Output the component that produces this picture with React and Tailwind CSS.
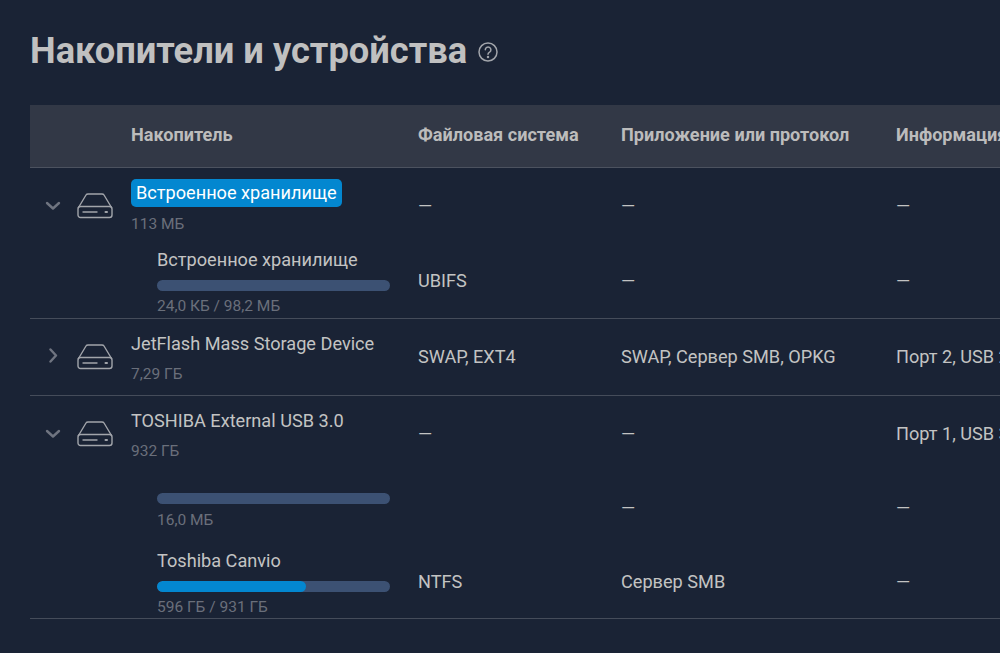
const GRID = "grid grid-cols-[101px_287px_203px_275px_400px] items-center";

function Chevron({ open }) {
  return (
    <svg width="18" height="18" viewBox="0 0 18 18" fill="none" stroke="#6f7480" strokeWidth="2.4" strokeLinecap="round" strokeLinejoin="round">
      {open ? <path d="M3 6 L9 11.5 L15 6" /> : <path d="M6.5 1.5 L12 7.5 L6.5 13.5" />}
    </svg>
  );
}

function Drive() {
  return (
    <svg width="36" height="26" viewBox="0 0 36 26" fill="none" stroke="#a2a5ab" strokeWidth="1.4" strokeLinejoin="round" strokeLinecap="round">
      <path d="M1.5 14.5 L9 2 Q9.6 1 11 1 L25 1 Q26.4 1 27 2 L34.5 14.5" />
      <rect x="1" y="13.5" width="34" height="11" rx="2.5" />
      <path d="M6 19 L20 19" />
      <path d="M28.5 19 L30 19" strokeWidth="2" />
    </svg>
  );
}

function Cells({ fs, app, info }) {
  return (
    <>
      <div className="whitespace-nowrap">{fs}</div>
      <div className="whitespace-nowrap">{app}</div>
      <div className="whitespace-nowrap">{info}</div>
    </>
  );
}

function DriveRow({ open, name, size, highlight, fs, app, info, border, h }) {
  return (
    <div className={`${GRID} ${h} ${border ? "border-b border-[#454c5a]" : ""}`}>
      <div className="flex items-center pl-[14px] gap-[15px]">
        <Chevron open={open} />
        <Drive />
      </div>
      <div className={`flex flex-col items-start whitespace-nowrap ${highlight ? "pt-[2px]" : "pt-[1px]"}`}>
        {highlight ? (
          <span className="bg-[#0387d0] text-white rounded-[5px] px-[5px] h-[28px] leading-[28px]">{name}</span>
        ) : (
          <span className="h-[26px] leading-[26px]">{name}</span>
        )}
        <span className="text-[15.5px] text-[#6a6f7b] leading-[20px] mt-[7px]">{size}</span>
      </div>
      <Cells fs={fs} app={app} info={info} />
    </div>
  );
}

function Volume({ name, used, label, fs, app, info, border, h }) {
  return (
    <div className={`${GRID} ${h} ${border ? "border-b border-[#454c5a]" : ""}`}>
      <div />
      <div className={`pl-[26px] flex flex-col whitespace-nowrap ${name ? "pt-[3px]" : "pt-[7px]"}`}>
        {name && <span className="leading-[22px] mb-[9px]">{name}</span>}
        <div className="w-[233px] h-[11px] rounded-full bg-[#3c5173] overflow-hidden">
          <div className="h-full rounded-full bg-[#0387d0]" style={{ width: `${used}%` }} />
        </div>
        <span className={`text-[15.5px] text-[#6a6f7b] leading-[20px] ${name ? "mt-[5px]" : "mt-[6px]"}`}>{label}</span>
      </div>
      <Cells fs={fs} app={app} info={info} />
    </div>
  );
}

export default function App() {
  return (
    <div className="w-[1000px] h-[653px] overflow-hidden bg-[#1a2335] text-[#c3c3c3] text-[18.15px] font-['Roboto',sans-serif] pl-[30px]">
      <div className="flex items-center gap-[11px] h-[105px] pb-[3px]">
        <h1 className="text-[36.3px] font-bold text-[#c0c0c0]">Накопители и устройства</h1>
        <svg width="20" height="20" viewBox="0 0 20 20" fill="none" stroke="#a2a5ab" strokeWidth="1.5" strokeLinecap="round" className="mt-[2px]">
          <circle cx="10" cy="10" r="9" />
          <path d="M7.3 7.8 A2.8 2.8 0 1 1 11.6 10.2 Q10 11 10 12.3" />
          <circle cx="10" cy="15" r="0.5" fill="#a2a5ab" />
        </svg>
      </div>
      <div className="w-[1266px]">
        <div className={`${GRID} h-[63px] pb-[2px] bg-[#323846] border-b border-[#4c525f] font-bold text-[18.1px] text-[#bcbcbc]`}>
          <div />
          <div>Накопитель</div>
          <div>Файловая система</div>
          <div>Приложение или протокол</div>
          <div className="whitespace-nowrap">Информация</div>
        </div>
        <DriveRow h="h-[75px]" open highlight name="Встроенное хранилище" size="113 МБ" fs="—" app="—" info="—" />
        <Volume h="h-[76px]" name="Встроенное хранилище" used={0} label="24,0 КБ / 98,2 МБ" fs="UBIFS" app="—" info="—" border />
        <DriveRow h="h-[77px]" name="JetFlash Mass Storage Device" size="7,29 ГБ" fs="SWAP, EXT4" app="SWAP, Сервер SMB, OPKG" info="Порт 2, USB 2.0" border />
        <DriveRow h="h-[75px]" open name="TOSHIBA External USB 3.0" size="932 ГБ" fs="—" app="—" info="Порт 1, USB 3.0" />
        <Volume h="h-[74px]" used={0} label="16,0 МБ" fs="" app="—" info="—" />
        <Volume h="h-[74px]" name="Toshiba Canvio" used={64} label="596 ГБ / 931 ГБ" fs="NTFS" app="Сервер SMB" info="—" border />
      </div>
    </div>
  );
}
